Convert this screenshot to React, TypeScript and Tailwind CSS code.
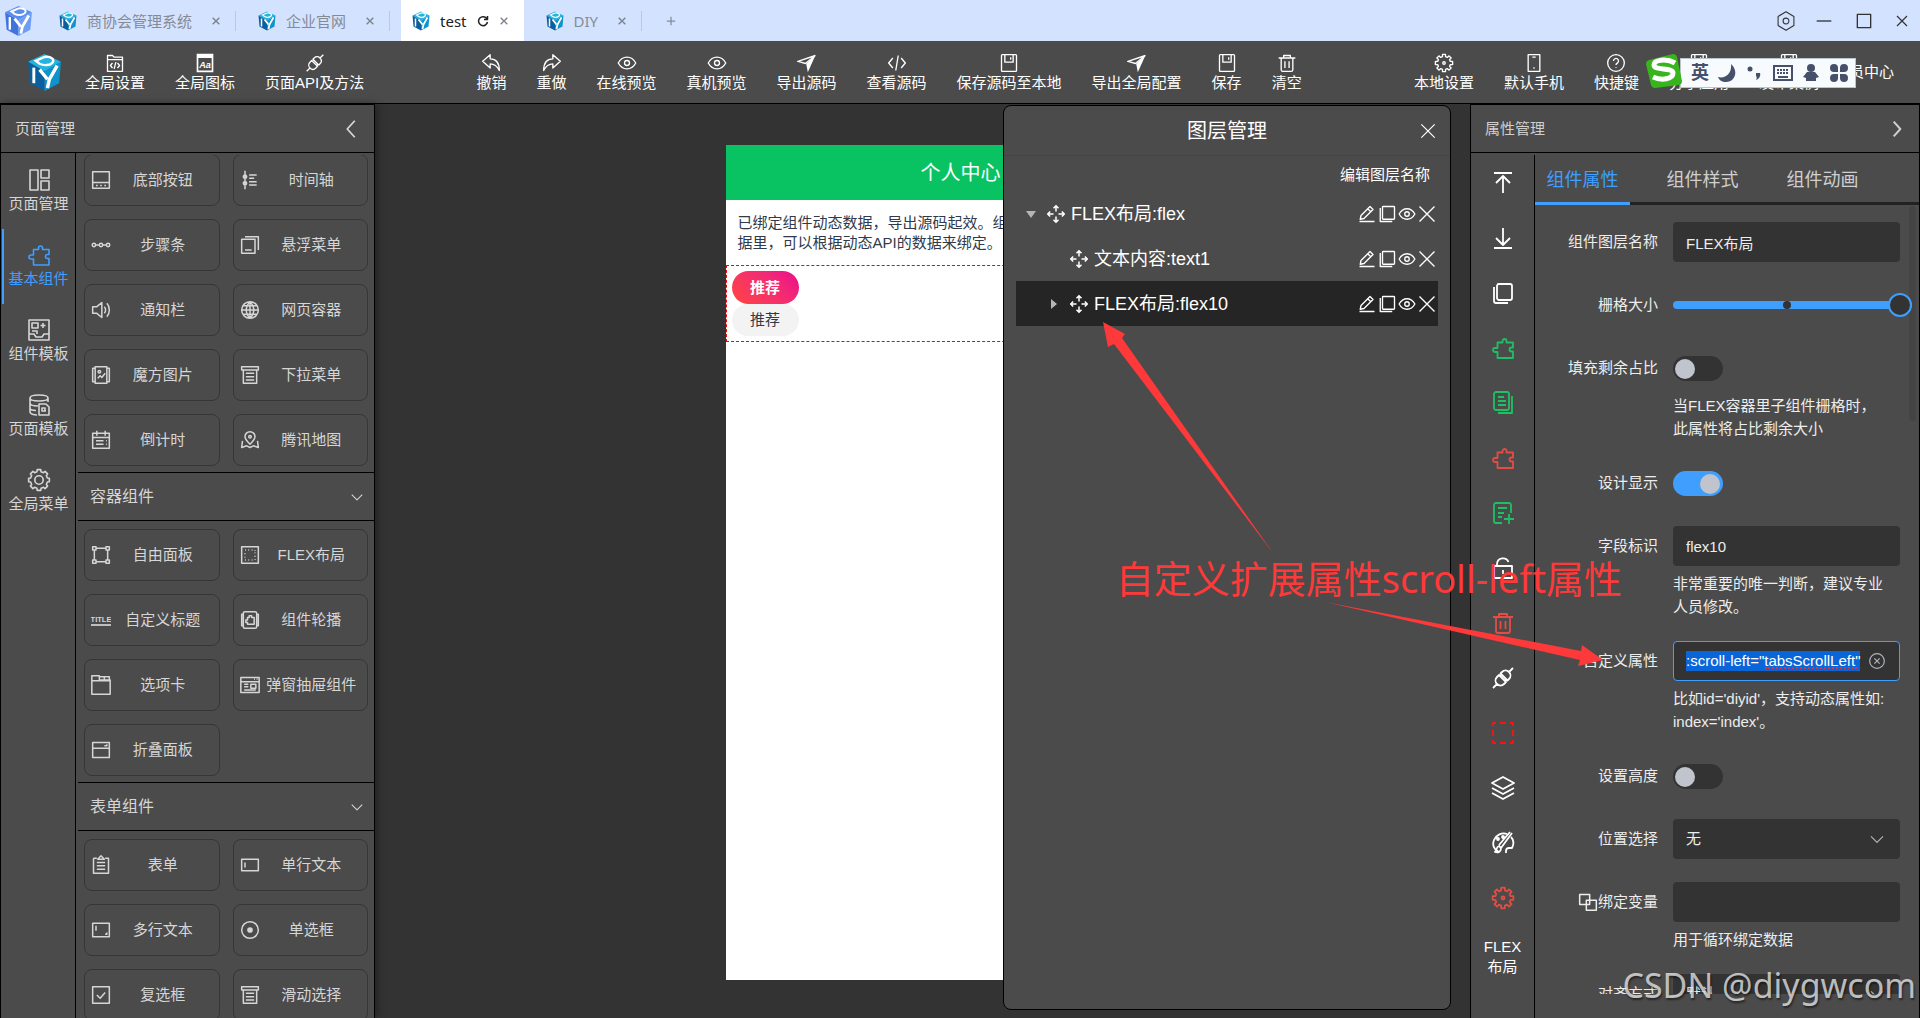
import React, { useEffect, useRef } from 'react'
import { clsx } from 'clsx'

const circle = (cx: number, cy: number, r: number) =>
  `M${cx - r} ${cy}a${r} ${r} 0 1 0 ${2 * r} 0a${r} ${r} 0 1 0 ${-2 * r} 0z`

const gear = (outer: number, inner: number) => {
  const points: string[] = []
  for (let i = 0; i < 8; i++) {
    const base = (i * Math.PI) / 4
    const steps: [number, number][] = [
      [-0.24, inner],
      [-0.17, outer],
      [0.17, outer],
      [0.24, inner],
    ]
    steps.forEach(([offset, r]) => {
      points.push(
        `${(12 + r * Math.sin(base + offset)).toFixed(2)} ${(12 - r * Math.cos(base + offset)).toFixed(2)}`
      )
    })
  }
  return `M${points.join('L')}z`
}

const ICONS = {
  codeFolder: 'M3 3h6l2 2h10v17H3zM3 8h18M9 12l-2.500 3 2.500 3M15 12l2.500 3-2.500 3M13 11l-2 8',
  plug: 'M2 22l4-4M18 6l4-4M6 18c-2-2-2-5 0-7l2-2 7 7-2 2c-2 2-5 2-7 0zM9 10l1.500-1.500M14 15l1.500-1.500M18 6c-2-2-5-2-7 0l-1.500 1.500 7 7L18 13c2-2 2-5 0-7z',
  undo: 'M11 2L2 10l9 8v-5c5 0 8 2 11 8 0-8-3-14-11-14z',
  redo: 'M13 2l9 8-9 8v-5c-5 0-8 2-11 8 0-8 3-14 11-14z',
  eye: `M1.500 12C4 7.500 8 5 12 5s8 2.500 10.500 7C20 16.500 16 19 12 19S4 16.500 1.500 12z${circle(12, 12, 3)}`,
  code: 'M7 6l-5 6 5 6M17 6l5 6-5 6M13.500 3l-3 18',
  save: 'M4 2h16a1 1 0 0 1 1 1v18a1 1 0 0 1-1 1H4a1 1 0 0 1-1-1V3a1 1 0 0 1 1-1zM7 2v9h10V2M14 5v3',
  trash: 'M2 6h20M8 6V3h8v3M5 6v14a2 2 0 0 0 2 2h10a2 2 0 0 0 2-2V6M9.500 10v8M14.500 10v8',
  gear: `${gear(10.5, 7.8)}${circle(12, 12, 1.5)}`,
  cog: `${gear(10.5, 8.6)}${circle(12, 12, 4.2)}`,
  phone: 'M5 2h14v20H5zM10 5h4M12 17v2',
  help: `${circle(12, 12, 10)}M9 9.500a3 3 0 1 1 4.500 2.600c-1 .600-1.500 1.200-1.500 2.400M12 17v1`,
  layout: 'M3 2h8v20H3zM14 2h8v8h-8zM14 13h8v9h-8z',
  puzzle: 'M6.500 6.500h5V5a2 2 0 1 1 4 0v1.500H22v5h-1.500a2 2 0 1 0 0 4H22V22H6.500v-6H4a2 2 0 1 1 0-4h2.500z',
  template: 'M2 2h20v20H2zM5 5h6v5H5zM5 13h5v3M16 5v5M13.500 7.500h5M2 16h5l2 3h6l2-3h5',
  database: 'M3 5c0-4 18-4 18 0s-18 4-18 0v14c0 2 4 3 7 3M3 10c0 2 4 3 8 3M3 15c0 1.500 3 2.500 6 2.500M21 5v4M12 11h7l3 3v8H12zM15 15h3v3h-3zM17 18h2',
  bottomBar: 'M2 2h20v20H2zM2 15h20M6 18.500h2M11 18.500h2M16 18.500h2',
  timeline: `M6 1v22${circle(6, 8, 2)}${circle(6, 16, 2)}M11 6h9M11 10h6M11 14h9M11 18h9`,
  steps: `${circle(3.5, 12, 2)}${circle(12, 12, 2)}${circle(20.5, 12, 2)}M6 12h3.500M14.500 12H18`,
  floating: 'M2 5h16v17H2zM6 2h16v16M6 18h8',
  speaker: 'M2 8h5l6-5v18l-6-5H2zM16 8c2 2 2 6 0 8M19 4c4 4 4 12 0 16',
  globe: `${circle(12, 12, 10)}M2 12h20M12 2v20M4 7h16M4 17h16M12 2c-6 6-6 14 0 20M12 2c6 6 6 14 0 20`,
  picture: `M5 2h14v20H5zM5 4H2v16h3M19 4h3v16h-3${circle(10, 8, 1.5)}M8 16l3-3 2 2 4-5`,
  dropdown: 'M2 2h20v4H2zM4 6v16h16V6M7 10h10M7 14h10M7 18h10',
  calendar: 'M2 4h20v18H2zM7 1v6M17 1v6M2 9h20M6 13h9M6 17h9M18 13h1M18 17h1',
  mapPin: `M12 17c-4-4-6-6-6-9a6 6 0 0 1 12 0c0 3-2 5-6 9z${circle(12, 8, 1.5)}M3 13l-1 8 6-2 4 2 4-2 6 2-1-8`,
  freePanel: 'M2 2h4v4H2zM18 2h4v4h-4zM2 18h4v4H2zM18 18h4v4h-4zM6 4h12M6 20h12M4 6v12M20 6v12',
  flexBox: 'M2 2h20v20H2zM6 6h1M10 6h1M14 6h1M18 6v1M6 10v1M6 14v1M6 18h1M10 18h1M14 18h1M18 18v-1M18 14v-1M18 10V9',
  carousel: 'M6 2h12a2 2 0 0 1 2 2v16a2 2 0 0 1-2 2H6a2 2 0 0 1-2-2V4a2 2 0 0 1 2-2zM4 5H2v14h2M20 5h2v14h-2M9 9h2V7h3v2h3v8H9v-2H7v-3h2z',
  tabs: 'M1 1h9v5h13v17H1zM1 7h22M16 2v4M10 2h12v4',
  dialog: 'M1 3h22v18H1zM1 8h22M17 5h1M20 5h1M13 11h6v5h-6zM5 11h5M5 14h5M5 18h14',
  collapse: 'M2 3h20v18H2zM2 10h20M16 7h3V5',
  form: 'M3 4h4M17 4h4v18H3V4M8 5l4-4 4 4zM7 9h10M7 13h10M7 17h10',
  singleLine: 'M2 5h20v14H2zM6 9v6',
  multiLine: 'M2 4h20v16H2zM6 7v6M19 15v2h-2',
  radio: `${circle(12, 12, 10)}${circle(12, 12, 2.5)}${circle(12, 12, 1)}`,
  check: 'M2 2h20v20H2zM7 12l4 4 6-7',
  toTop: 'M3 2h18M12 22V5M5 12l7-7 7 7',
  toBottom: 'M3 22h18M12 2v17M5 12l7 7 7-7',
  copy: 'M7 3h12a2 2 0 0 1 2 2v12a2 2 0 0 1-2 2H8a2 2 0 0 1-2-2V5a2 2 0 0 1 2-2zM3 6v14a2 2 0 0 0 2 2h12',
  pages: 'M5 1h11a2 2 0 0 1 2 2v14a2 2 0 0 1-2 2H5a2 2 0 0 1-2-2V3a2 2 0 0 1 2-2zM21 5v17H7M7 6h6M7 10h8M7 14h8',
  pageAdd: 'M20 12V4a2 2 0 0 0-2-2H5a2 2 0 0 0-2 2v16a2 2 0 0 0 2 2h6M7 7h9M7 12h6M7 16h4M13 18h10M18 13v10',
  unlock: 'M3 10h18v12H3zM6 10V8a6 6 0 0 1 11.500-2M12 14v4',
  region: 'M2 5V2h3M9 2h6M19 2h3v3M22 9v6M22 19v3h-3M15 22H9M5 22H2v-3M2 15V9',
  layers: 'M12 1l11 6-11 6L1 7zM1 12l11 6 11-6M1 17l11 6 11-6',
  palette: `M8 21C3 19 1 14 3 9c2-5 8-8 13-6M20 6c3 3 3 7 1 11h-3c-2 0-3 1-3 3v2M21 2L10 17M19 1L8 14M8 15c-3 1-2 4-4 6 3 1 6 0 6-4z${circle(7, 8, 1)}${circle(12, 6, 1)}`,
  edit: 'M2 22h20M3 19l1-5L16 2l4 4L8 18zM13 5l4 4',
  square: 'M7 2h14a1 1 0 0 1 1 1v15a1 1 0 0 1-1 1H7a1 1 0 0 1-1-1V3a1 1 0 0 1 1-1zM3 4v18h16',
  close: 'M2 2l20 20M22 2L2 22',
  move: 'M12 9V2M9 5l3-3 3 3M12 15v7M9 19l3 3 3-3M9 12H2M5 9l-3 3 3 3M15 12h7M19 9l3 3-3 3',
  chevronDown: 'M3 8l9 9 9-9',
  chevronLeft: 'M17 1L7 12l10 11',
  chevronRight: 'M7 1l10 11L7 23',
  bind: 'M2 3h12v12H2zM10 10h12v12H10z',
  clear: `${circle(12, 12, 11)}M8 8l8 8M16 8l-8 8`,
  reload: 'M20 8a9 9 0 1 0 1 6M21 2v7h-7',
  hexagon: `M12 1l9.500 5.500v11L12 23l-9.500-5.500v-11z${circle(12, 12, 3.5)}`,
  minimize: 'M1 12h22',
  maximize: 'M2 2h20v20H2z',
  plus: 'M12 2v20M2 12h20',
}

type IconName = keyof typeof ICONS | 'fontPage' | 'send' | 'title'

const Icon = ({
  name,
  className,
  width = 1.8,
}: {
  name: IconName
  className?: string
  width?: number
}) => {
  if (name === 'fontPage') {
    return (
      <svg viewBox="0 0 24 24" className={className} aria-hidden="true">
        <path d="M3 2h18v20H3z" fill="none" stroke="currentColor" strokeWidth="2" />
        <path d="M3 2h18v4H3z" fill="currentColor" />
        <text x="12" y="18" textAnchor="middle" fontSize="11" fontWeight="700" fontStyle="italic" fill="currentColor">
          Aa
        </text>
      </svg>
    )
  }
  if (name === 'send') {
    return (
      <svg viewBox="0 0 24 24" className={className} aria-hidden="true">
        <path d="M22 3L1 10l9 2.500z" fill="none" stroke="currentColor" strokeWidth="1.600" />
        <path d="M22 3l-9 20-2-10z" fill="currentColor" />
      </svg>
    )
  }
  if (name === 'title') {
    return (
      <svg viewBox="0 0 24 24" className={className} aria-hidden="true">
        <text x="12" y="14" textAnchor="middle" fontSize="9" fontWeight="700" fill="currentColor">
          TITLE
        </text>
        <path d="M0 18h24" stroke="currentColor" strokeWidth="2" />
      </svg>
    )
  }
  return (
    <svg
      viewBox="0 0 24 24"
      className={className}
      fill="none"
      stroke="currentColor"
      strokeWidth={width}
      strokeLinejoin="round"
      aria-hidden="true"
    >
      <path d={ICONS[name]} />
    </svg>
  )
}

const Logo = ({ className, flat }: { className?: string; flat?: boolean }) => {
  const [top, left, right] = flat ? ['#5b8def', '#3f74dd', '#6f9df5'] : ['#22b4e0', '#0b5f9c', '#0f93cc']
  return (
    <svg viewBox="0 0 36 38" className={className} aria-hidden="true">
      <path d="M18 0l17 8-17 10L1 8z" fill={top} />
      <path d="M1 8l17 10v20L3 30z" fill={left} />
      <path d="M35 8L18 18v20l15-8z" fill={right} />
      <path d="M9 7l9-4c7-1 11 3 8 6-3 3-9 3-13 1z" fill="none" stroke="#fff" strokeWidth="2.500" />
      <path d="M7 14v16" stroke="#fff" strokeWidth="3" />
      <path d="M13 16l8 10M31 12l-8 14-2 9" fill="none" stroke="#fff" strokeWidth="3.500" />
    </svg>
  )
}

const TABS = [
  { name: '商协会管理系统' },
  { name: '企业官网' },
  { name: 'test', active: true },
  { name: 'DIY' },
]

const TitleBar = () => (
  <header className="flex h-[41px] shrink-0 items-center justify-between bg-[#d3e2fe]">
    <div className="flex h-full items-center">
      <Logo flat className="mr-[15px] ml-1 h-[30px] w-[29px]" />
      <nav className="flex h-full items-center gap-[11px] font-['Noto_Sans','Noto_Sans_CJK_SC',sans-serif] text-[15px]">
        {TABS.map((tab) => (
          <div
            key={tab.name}
            className={clsx(
              'flex items-center pr-3.5 pl-[11px]',
              tab.active
                ? 'h-full border-r border-white bg-white text-[#222]'
                : 'h-5 border-r border-[#b9c8e4] text-[#858b96]'
            )}
          >
            <Logo className="mr-2.5 h-5 w-[18px]" />
            <span>{tab.name}</span>
            {tab.active && (
              <button type="button" aria-label="刷新" className="ml-2.5">
                <Icon name="reload" width={3} className="size-3" />
              </button>
            )}
            <button
              type="button"
              aria-label="关闭标签"
              className={clsx('text-[#7c818b]', tab.active ? 'ml-2.5' : 'ml-[19px]')}
            >
              <Icon name="close" width={4} className="size-2.5 p-px" />
            </button>
          </div>
        ))}
      </nav>
      <button type="button" aria-label="新建标签" className="ml-6 text-[#858b96]">
        <Icon name="plus" width={3} className="size-2.5" />
      </button>
    </div>
    <div className="flex items-center gap-5 pr-3 text-[#333]">
      <button type="button" aria-label="设置">
        <Icon name="hexagon" width={1.3} className="size-5" />
      </button>
      <button type="button" aria-label="最小化">
        <Icon name="minimize" width={2} className="size-4" />
      </button>
      <button type="button" aria-label="最大化">
        <Icon name="maximize" width={2} className="ml-1 size-4" />
      </button>
      <button type="button" aria-label="关闭">
        <Icon name="close" width={2.4} className="ml-1 size-3" />
      </button>
    </div>
  </header>
)

type Tool = { icon?: IconName; name: string }

const LEFT_TOOLS: Tool[] = [
  { icon: 'codeFolder', name: '全局设置' },
  { icon: 'fontPage', name: '全局图标' },
  { icon: 'plug', name: '页面API及方法' },
]

const CENTER_TOOLS: Tool[] = [
  { icon: 'undo', name: '撤销' },
  { icon: 'redo', name: '重做' },
  { icon: 'eye', name: '在线预览' },
  { icon: 'eye', name: '真机预览' },
  { icon: 'send', name: '导出源码' },
  { icon: 'code', name: '查看源码' },
  { icon: 'save', name: '保存源码至本地' },
  { icon: 'send', name: '导出全局配置' },
  { icon: 'save', name: '保存' },
  { icon: 'trash', name: '清空' },
]

const RIGHT_TOOLS: Tool[] = [
  { icon: 'gear', name: '本地设置' },
  { icon: 'phone', name: '默认手机' },
  { icon: 'help', name: '快捷键' },
  { icon: 'save', name: '分享应用' },
  { icon: 'save', name: '发布案例' },
]

const ToolGroup = ({ tools }: { tools: Tool[] }) => (
  <div className="flex pt-0.5">
    {tools.map((tool) => (
      <button key={tool.name} type="button" className="flex flex-col items-center px-[15px] whitespace-nowrap">
        {tool.icon && <Icon name={tool.icon} width={1.6} className="size-5" />}
        <span className="leading-5">{tool.name}</span>
      </button>
    ))}
  </div>
)

// floating input-method bar
const ImeBar = () => (
  <div className="absolute top-[13px] right-16 flex items-center">
    <svg viewBox="0 0 36 34" className="z-10 -mr-0.5 h-[34px] w-9" aria-hidden="true">
      <path d="M3 6L27 0q3 0 4 3l5 24q0 3-3 4L9 34q-3 0-4-3L0 10q0-3 3-4z" fill="#38b51c" />
      <path d="M29 9C20 4 8 6 8 11c0 6 19 2 19 8 0 6-11 8-20 4" fill="none" stroke="#fff" strokeWidth="5" />
    </svg>
    <div className="mt-1 flex h-[30px] items-center gap-2 border border-[#b9c4cc] bg-[#f7fbfd] pr-1.5 pl-2.5 text-[#47506b]">
      <span className="text-lg leading-5 font-bold">英</span>
      <svg viewBox="0 0 20 20" className="size-5" fill="currentColor" aria-hidden="true">
        <path d="M14 1c8 7 4 18-5 18-4 0-7-2-8-5 8 2 14-4 13-13z" />
      </svg>
      <svg viewBox="0 0 20 20" className="size-5" fill="currentColor" aria-hidden="true">
        <circle cx="5" cy="6" r="2.500" />
        <path d="M11 10h4c1 3-1 6-4 7 1-2 1-3 0-4z" />
      </svg>
      <svg viewBox="0 0 20 20" className="size-5" fill="none" stroke="currentColor" strokeWidth="2" aria-hidden="true">
        <path d="M1 3h18v14H1z" />
        <path d="M4 7h12M4 10h12" strokeDasharray="2 1" />
        <path d="M5 14h10" />
      </svg>
      <svg viewBox="0 0 20 20" className="size-5" fill="currentColor" aria-hidden="true">
        <circle cx="10" cy="5" r="4" />
        <path d="M6 9h8l4 5-3 1v3H5v-3l-3-1z" />
      </svg>
      <svg viewBox="0 0 20 20" className="size-5" fill="currentColor" aria-hidden="true">
        <path d="M9 9H5a4 4 0 1 1 4-4zM11 9V5a4 4 0 1 1 4 4zM9 11v4a4 4 0 1 1-4-4zM11 11h4a4 4 0 1 1-4 4z" />
      </svg>
    </div>
  </div>
)

const Toolbar = () => (
  <div className="relative flex h-[63px] shrink-0 items-center justify-between border-b border-black bg-[#4b4b4b] text-white">
    <div className="flex items-center">
      <Logo className="mr-2 ml-[27px] h-[37px] w-[35px]" />
      <ToolGroup tools={LEFT_TOOLS} />
    </div>
    <ToolGroup tools={CENTER_TOOLS} />
    <div className="flex items-center pr-[26px]">
      <ToolGroup tools={RIGHT_TOOLS} />
      <button type="button">会员中心</button>
    </div>
    <ImeBar />
  </div>
)

const SIDE_MENU: { icon: IconName; name: string; active?: boolean }[] = [
  { icon: 'layout', name: '页面管理' },
  { icon: 'puzzle', name: '基本组件', active: true },
  { icon: 'template', name: '组件模板' },
  { icon: 'database', name: '页面模板' },
  { icon: 'cog', name: '全局菜单' },
]

const GROUPS: { title?: string; items: { icon: IconName; name: string }[] }[] = [
  {
    items: [
      { icon: 'bottomBar', name: '底部按钮' },
      { icon: 'timeline', name: '时间轴' },
      { icon: 'steps', name: '步骤条' },
      { icon: 'floating', name: '悬浮菜单' },
      { icon: 'speaker', name: '通知栏' },
      { icon: 'globe', name: '网页容器' },
      { icon: 'picture', name: '魔方图片' },
      { icon: 'dropdown', name: '下拉菜单' },
      { icon: 'calendar', name: '倒计时' },
      { icon: 'mapPin', name: '腾讯地图' },
    ],
  },
  {
    title: '容器组件',
    items: [
      { icon: 'freePanel', name: '自由面板' },
      { icon: 'flexBox', name: 'FLEX布局' },
      { icon: 'title', name: '自定义标题' },
      { icon: 'carousel', name: '组件轮播' },
      { icon: 'tabs', name: '选项卡' },
      { icon: 'dialog', name: '弹窗抽屉组件' },
      { icon: 'collapse', name: '折叠面板' },
    ],
  },
  {
    title: '表单组件',
    items: [
      { icon: 'form', name: '表单' },
      { icon: 'singleLine', name: '单行文本' },
      { icon: 'multiLine', name: '多行文本' },
      { icon: 'radio', name: '单选框' },
      { icon: 'check', name: '复选框' },
      { icon: 'dropdown', name: '滑动选择' },
    ],
  },
]

const ComponentPanel = () => (
  <aside className="z-10 flex w-[375px] shrink-0 flex-col border border-b-0 border-black bg-[#4b4b4b] text-[#d6d6d6] shadow-[2px_0_8px_rgba(0,0,0,0.4)]">
    <div className="flex h-12 shrink-0 items-center justify-between border-b border-black pr-3.5 pl-3.5">
      <h2>页面管理</h2>
      <button type="button" aria-label="收起">
        <Icon name="chevronLeft" width={2.4} className="size-[18px]" />
      </button>
    </div>
    <div className="flex min-h-0 flex-1">
      <nav className="w-[75px] shrink-0 border-r border-black pt-px">
        {SIDE_MENU.map((item) => (
          <button
            key={item.name}
            type="button"
            className={clsx(
              'ml-px flex h-[75px] w-[71px] flex-col items-center justify-center border-l-2',
              item.active ? 'border-[#409eff] text-[#409eff]' : 'border-transparent'
            )}
          >
            <Icon name={item.icon} width={1.6} className="size-6" />
            <span className="leading-6">{item.name}</span>
          </button>
        ))}
      </nav>
      <div className="mt-0.5 ml-0.5 min-w-0 flex-1 overflow-hidden">
        <div className="-mt-[9px]">
          {GROUPS.map((group) => (
            <section key={group.items[0].name}>
              {group.title && (
                <h3 className="flex h-[49px] items-center justify-between border-y border-black pr-2.5 pl-3 text-base">
                  {group.title}
                  <Icon name="chevronDown" className="size-3.5" />
                </h3>
              )}
              <div className="grid grid-cols-2 gap-[13px] pt-2 pr-1.5 pb-1.5 pl-1.5">
                {group.items.map((item) => (
                  <button
                    key={item.name}
                    type="button"
                    className="flex h-[52px] items-center rounded-lg border border-[#363636] pr-1 pl-1.5"
                  >
                    <Icon name={item.icon} className="size-5 shrink-0" />
                    <span className="flex-1 text-center whitespace-nowrap">{item.name}</span>
                  </button>
                ))}
              </div>
            </section>
          ))}
        </div>
      </div>
    </div>
  </aside>
)

const PhonePreview = () => (
  <div className="flex w-[470px] flex-col bg-white text-[#303a4a]">
    <div className="flex h-[55px] items-center justify-center bg-[#09c261] text-xl text-white">个人中心</div>
    <p className="h-[65px] px-3 pt-[13px] leading-5 whitespace-nowrap">
      已绑定组件动态数据，导出源码起效。组件
      <br />
      据里，可以根据动态API的数据来绑定。
    </p>
    <div className="flex flex-col items-start border border-dashed border-[#f00] p-[5px]">
      <button
        type="button"
        className="h-[33px] w-[67px] rounded-full bg-linear-45 from-[#ff433c] to-[#ec008c] font-bold text-white"
      >
        推荐
      </button>
      <button type="button" className="h-8 w-[67px] rounded-full bg-[#f3f3f3]">
        推荐
      </button>
    </div>
  </div>
)

const LAYERS = [
  { name: 'FLEX布局:flex', caret: 'down', nested: false },
  { name: '文本内容:text1', nested: true },
  { name: 'FLEX布局:flex10', caret: 'right', nested: true, active: true },
]

const LAYER_ACTIONS: { icon: IconName; label: string }[] = [
  { icon: 'edit', label: '编辑' },
  { icon: 'square', label: '复制' },
  { icon: 'eye', label: '显示' },
  { icon: 'close', label: '删除' },
]

const LayerPanel = () => (
  <section className="absolute top-px right-[19px] bottom-2 w-[448px] rounded-lg border border-black bg-[#4b4b4b] text-white">
    <div className="relative flex h-[50px] items-center justify-center border-b border-[#444] pt-px">
      <h2 className="text-xl">图层管理</h2>
      <button type="button" aria-label="关闭" className="absolute right-3.5">
        <Icon name="close" className="size-4" />
      </button>
    </div>
    <div className="px-3">
      <div className="flex h-[35px] items-center justify-end pt-0.5 pr-2">编辑图层名称</div>
      <ul>
        {LAYERS.map((layer) => (
          <li
            key={layer.name}
            className={clsx(
              'flex h-[45px] items-center text-lg',
              layer.nested && 'pl-[23px]',
              layer.active && 'bg-[#252525]'
            )}
          >
            <span className="flex w-[30px] justify-center text-[#b4b6bc]">
              {layer.caret && (
                <svg viewBox="0 0 10 10" className="size-2.5" fill="currentColor" aria-hidden="true">
                  <path d={layer.caret === 'down' ? 'M0 2h10L5 9z' : 'M2 0v10l6-5z'} />
                </svg>
              )}
            </span>
            <Icon name="move" className="mr-[5px] size-5" />
            <span className="flex-1">{layer.name}</span>
            <span className="flex pr-px">
              {LAYER_ACTIONS.map((action) => (
                <button key={action.icon} type="button" aria-label={action.label}>
                  <Icon name={action.icon} className="size-5 p-px" />
                </button>
              ))}
            </span>
          </li>
        ))}
      </ul>
    </div>
  </section>
)

const SIDE_TOOLS: { icon: IconName; label: string; color: string }[] = [
  { icon: 'toTop', label: '置顶', color: 'text-white' },
  { icon: 'toBottom', label: '置底', color: 'text-white' },
  { icon: 'copy', label: '复制', color: 'text-white' },
  { icon: 'puzzle', label: '存为组件', color: 'text-[#1fc063]' },
  { icon: 'pages', label: '复制页面', color: 'text-[#1fc063]' },
  { icon: 'puzzle', label: '移除组件', color: 'text-[#e34d45]' },
  { icon: 'pageAdd', label: '新增', color: 'text-[#1fc063]' },
  { icon: 'unlock', label: '解锁', color: 'text-white' },
  { icon: 'trash', label: '删除', color: 'text-[#e34d45]' },
  { icon: 'plug', label: '接口', color: 'text-white' },
  { icon: 'region', label: '选区', color: 'text-[#f11]' },
  { icon: 'layers', label: '图层', color: 'text-white' },
  { icon: 'palette', label: '主题', color: 'text-white' },
  { icon: 'gear', label: '设置', color: 'text-[#e34d45]' },
]

const Field = ({
  id,
  label,
  help,
  icon,
  children,
}: {
  id: string
  label: string
  help?: string
  icon?: IconName
  children: React.ReactNode
}) => (
  <div className="flex gap-[15px]">
    <label htmlFor={id} className="flex h-10 w-[123px] shrink-0 items-center justify-end">
      {icon && <Icon name={icon} className="size-5" />}
      {label}
    </label>
    <div className="min-w-0 flex-1">
      <div className="relative flex h-10 items-center">{children}</div>
      {help && <p className="mt-1.5 pr-3 leading-[23px]">{help}</p>}
    </div>
  </div>
)

const Switch = ({ id, checked }: { id: string; checked?: boolean }) => (
  <input
    id={id}
    type="checkbox"
    role="switch"
    defaultChecked={checked}
    className="h-[25px] w-[50px] appearance-none rounded-full bg-[#333] p-0.5 before:block before:size-5 before:translate-y-px before:rounded-full before:bg-[#c0c4cc] checked:bg-[#409eff] checked:before:ml-[25px]"
  />
)

const Select = ({ id, value }: { id: string; value: string }) => (
  <>
    <select id={id} className="h-10 w-full appearance-none rounded bg-[#333] px-[13px]">
      <option>{value}</option>
    </select>
    <Icon name="chevronDown" className="pointer-events-none absolute right-[15px] size-4 text-[#b0b3b8]" />
  </>
)

const inputClass = 'h-10 w-full rounded bg-[#333] px-[13px] outline-none'

const PropertyPanel = () => {
  const attrRef = useRef<HTMLInputElement>(null)

  useEffect(() => {
    attrRef.current?.focus({ preventScroll: true })
    attrRef.current?.select()
  }, [])

  return (
    <aside className="flex w-[450px] shrink-0 flex-col border border-b-0 border-black bg-[#4b4b4b] text-[#ededed]">
      <div className="flex h-12 shrink-0 items-center justify-between border-b border-black pr-3.5 pl-3.5 text-[#cfcfcf]">
        <h2>属性管理</h2>
        <button type="button" aria-label="收起">
          <Icon name="chevronRight" width={3} className="size-4" />
        </button>
      </div>
      <div className="flex min-h-0 flex-1 pt-0.5">
        <div className="flex w-16 shrink-0 flex-col items-center border-r border-black text-white">
          {SIDE_TOOLS.map((tool) => (
            <button
              key={tool.label}
              type="button"
              aria-label={tool.label}
              className={clsx('flex h-[55px] w-full items-center justify-center', tool.color)}
            >
              <Icon name={tool.icon} className="size-6" />
            </button>
          ))}
          <span className="w-10 pt-3 text-center leading-5">FLEX布局</span>
        </div>
        <div className="relative mb-6 flex min-w-0 flex-1 flex-col">
          <div className="flex h-[50px] shrink-0 border-b-3 border-[#222] text-lg text-[#cfcfcf]" role="tablist">
            <button
              type="button"
              role="tab"
              className="-mb-[3px] w-[95px] border-b-3 border-[#409eff] pt-0.5 text-[#409eff]"
            >
              组件属性
            </button>
            <button type="button" role="tab" className="ml-[25px] w-[95px] pt-0.5">
              组件样式
            </button>
            <button type="button" role="tab" className="ml-[25px] w-[95px] pt-0.5">
              组件动画
            </button>
          </div>
          <span className="absolute top-[51px] right-[3px] h-[215px] w-[7px] rounded-full bg-[#444]" />
          <form className="flex min-h-0 flex-1 flex-col gap-[23px] overflow-hidden pt-[17px] pr-[19px] *:shrink-0">
            <Field id="layer-name" label="组件图层名称">
              <input id="layer-name" defaultValue="FLEX布局" className={inputClass} />
            </Field>
            <Field id="grid-size" label="栅格大小">
              <input
                id="grid-size"
                type="range"
                defaultValue={100}
                className="-mr-3 h-2 min-w-0 flex-1 appearance-none rounded-full bg-[#409eff] [&::-webkit-slider-thumb]:size-6 [&::-webkit-slider-thumb]:appearance-none [&::-webkit-slider-thumb]:rounded-full [&::-webkit-slider-thumb]:border-2 [&::-webkit-slider-thumb]:border-[#409eff] [&::-webkit-slider-thumb]:bg-[#333]"
              />
              <span className="absolute left-1/2 size-2 -translate-x-1/2 rounded-full bg-[#333]" />
            </Field>
            <Field id="fill-rest" label="填充剩余占比" help="当FLEX容器里子组件栅格时，此属性将占比剩余大小">
              <Switch id="fill-rest" />
            </Field>
            <Field id="design-show" label="设计显示">
              <Switch id="design-show" checked />
            </Field>
            <Field id="field-id" label="字段标识" help="非常重要的唯一判断，建议专业人员修改。">
              <input id="field-id" defaultValue="flex10" className={inputClass} />
            </Field>
            <Field id="custom-attr" label="自定义属性" help="比如id='diyid'，支持动态属性如: index='index'。">
              <div className="flex h-10 w-full items-center rounded border border-[#409eff] bg-[#333] pr-3.5 pl-3">
                <input
                  id="custom-attr"
                  ref={attrRef}
                  defaultValue=':scroll-left="tabsScrollLeft"'
                  spellCheck={false}
                  className="mr-1.5 min-w-0 flex-1 outline-none selection:bg-[#0a66d8] selection:text-white"
                />
                <span className="pointer-events-none absolute bottom-3 left-[92px] w-[92px] border-b-2 border-dotted border-[#d8323a]" />
                <button type="button" aria-label="清空">
                  <Icon name="clear" className="size-4 text-[#b0b3b8]" />
                </button>
              </div>
            </Field>
            <Field id="set-height" label="设置高度">
              <Switch id="set-height" />
            </Field>
            <Field id="position" label="位置选择">
              <Select id="position" value="无" />
            </Field>
            <Field id="bind-var" label="绑定变量" icon="bind" help="用于循环绑定数据">
              <input id="bind-var" className={inputClass} />
            </Field>
            <Field id="align" label="对齐方式">
              <Select id="align" value="默认" />
            </Field>
          </form>
        </div>
      </div>
    </aside>
  )
}

const Annotation = () => (
  <div className="pointer-events-none absolute inset-0 z-20 overflow-hidden font-['Noto_Sans','Noto_Sans_CJK_SC',sans-serif] whitespace-nowrap">
    <svg viewBox="0 0 500 344" className="absolute top-[322px] right-[317px] h-[344px] w-[500px]" fill="#fd3939" aria-hidden="true">
      <path d="M0 0L22 12L19 16L170 231L11 22L5 25z" />
      <path d="M222 280L478 329L479 323L500 338L475 344L477 338z" />
    </svg>
    <p className="absolute top-[552px] right-[298px] text-[38px] leading-[52px] text-[#fd3939]">
      自定义扩展属性scroll-left属性
    </p>
    <p className="absolute right-1 bottom-2.5 text-[34px] leading-[46px] text-white/70 [text-shadow:1px_2px_2px_rgba(0,0,0,0.5)]">
      CSDN @diygwcom
    </p>
  </div>
)

const App = () => (
  <div className="relative flex h-screen flex-col overflow-hidden bg-[#333] font-['Liberation_Sans','Noto_Sans_CJK_SC',sans-serif] text-[15px] leading-5">
    <TitleBar />
    <Toolbar />
    <main className="flex min-h-0 flex-1">
      <ComponentPanel />
      <div className="relative flex min-w-0 flex-1 justify-center overflow-hidden pt-[41px] pb-[38px] pl-[76px]">
        <PhonePreview />
        <LayerPanel />
      </div>
      <PropertyPanel />
    </main>
    <Annotation />
  </div>
)

export default App
